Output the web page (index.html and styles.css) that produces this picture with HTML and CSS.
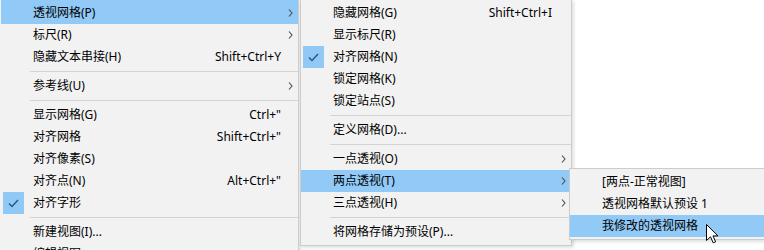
FILE: index.html
```
<!DOCTYPE html>
<html>
  <head>
    <meta charset="UTF-8">
    <title>视图菜单</title>
    <link rel="stylesheet" href="styles.css">
  </head>
  <body>
    <div class="screen">
      <ul class="menu menu-main">
        <li class="item first active"><span class="check"></span><span class="label">透视网格(P)</span><span class="key"></span><span class="arrow"><svg width="5" height="8" viewBox="0 0 5 8"><path d="M1 0.5 L4 4 L1 7.5" /></svg></span></li>
        <li class="item"><span class="check"></span><span class="label">标尺(R)</span><span class="key"></span><span class="arrow"><svg width="5" height="8" viewBox="0 0 5 8"><path d="M1 0.5 L4 4 L1 7.5" /></svg></span></li>
        <li class="item"><span class="check"></span><span class="label">隐藏文本串接(H)</span><span class="key">Shift+Ctrl+Y</span><span class="arrow"></span></li>
        <li class="sep"></li>
        <li class="item"><span class="check"></span><span class="label">参考线(U)</span><span class="key"></span><span class="arrow"><svg width="5" height="8" viewBox="0 0 5 8"><path d="M1 0.5 L4 4 L1 7.5" /></svg></span></li>
        <li class="sep"></li>
        <li class="item"><span class="check"></span><span class="label">显示网格(G)</span><span class="key">Ctrl+"</span><span class="arrow"></span></li>
        <li class="item"><span class="check"></span><span class="label">对齐网格</span><span class="key">Shift+Ctrl+"</span><span class="arrow"></span></li>
        <li class="item"><span class="check"></span><span class="label">对齐像素(S)</span><span class="key"></span><span class="arrow"></span></li>
        <li class="item"><span class="check"></span><span class="label">对齐点(N)</span><span class="key">Alt+Ctrl+"</span><span class="arrow"></span></li>
        <li class="item"><span class="check on"><svg width="11" height="9" viewBox="0 0 11 9"><path d="M1 4.5 L4 7.5 L10 1" /></svg></span><span class="label">对齐字形</span><span class="key"></span><span class="arrow"></span></li>
        <li class="sep"></li>
        <li class="item"><span class="check"></span><span class="label">新建视图(I)...</span><span class="key"></span><span class="arrow"></span></li>
        <li class="item"><span class="check"></span><span class="label">编辑视图...</span><span class="key"></span><span class="arrow"></span></li>
      </ul>

      <ul class="menu menu-sub">
        <li class="item"><span class="check"></span><span class="label">隐藏网格(G)</span><span class="key">Shift+Ctrl+I</span><span class="arrow"></span></li>
        <li class="item"><span class="check"></span><span class="label">显示标尺(R)</span><span class="key"></span><span class="arrow"></span></li>
        <li class="item"><span class="check on"><svg width="11" height="9" viewBox="0 0 11 9"><path d="M1 4.5 L4 7.5 L10 1" /></svg></span><span class="label">对齐网格(N)</span><span class="key"></span><span class="arrow"></span></li>
        <li class="item"><span class="check"></span><span class="label">锁定网格(K)</span><span class="key"></span><span class="arrow"></span></li>
        <li class="item"><span class="check"></span><span class="label">锁定站点(S)</span><span class="key"></span><span class="arrow"></span></li>
        <li class="sep"></li>
        <li class="item"><span class="check"></span><span class="label">定义网格(D)...</span><span class="key"></span><span class="arrow"></span></li>
        <li class="sep"></li>
        <li class="item"><span class="check"></span><span class="label">一点透视(O)</span><span class="key"></span><span class="arrow"><svg width="5" height="8" viewBox="0 0 5 8"><path d="M1 0.5 L4 4 L1 7.5" /></svg></span></li>
        <li class="item active"><span class="check"></span><span class="label">两点透视(T)</span><span class="key"></span><span class="arrow"><svg width="5" height="8" viewBox="0 0 5 8"><path d="M1 0.5 L4 4 L1 7.5" /></svg></span></li>
        <li class="item"><span class="check"></span><span class="label">三点透视(H)</span><span class="key"></span><span class="arrow"><svg width="5" height="8" viewBox="0 0 5 8"><path d="M1 0.5 L4 4 L1 7.5" /></svg></span></li>
        <li class="sep"></li>
        <li class="item"><span class="check"></span><span class="label">将网格存储为预设(P)...</span><span class="key"></span><span class="arrow"></span></li>
      </ul>

      <ul class="menu menu-presets">
        <li class="item"><span class="check"></span><span class="label">[两点-正常视图]</span></li>
        <li class="item"><span class="check"></span><span class="label">透视网格默认预设 1</span></li>
        <li class="item active"><span class="check"></span><span class="label">我修改的透视网格</span></li>
      </ul>

      <svg class="cursor" width="13" height="20" viewBox="0 0 13 20">
        <path d="M0.5 0.5 L0.5 16.5 L4.5 12.8 L7.2 18.8 L9.6 17.8 L7 11.9 L12 11.9 Z" />
      </svg>
    </div>
  </body>
</html>
```

FILE: styles.css
```
body {
    margin: 0;
    background-color: #fff;
    font-family: "Noto Sans", "Noto Sans CJK SC", sans-serif;
    font-size: 12px;
    color: #000;
    overflow: hidden;
}

.screen {
    position: relative;
    display: flex;
    align-items: flex-start;
    width: 764px;
    height: 250px;
    overflow: hidden;
}

.menu {
    list-style: none;
    margin: 0;
    padding: 2px 0;
    background-color: #f2f2f2;
    border: 1px solid #cccccc;
    box-shadow: 2px 2px 3px rgba(0, 0, 0, 0.12);
    flex-shrink: 0;
}

.menu-main {
    width: 297px;
    margin-top: -1px;
    padding-top: 0;
    border-left-color: #f2f2f2;
}

.menu-sub {
    width: 270px;
    margin-top: -1px;
    margin-left: 1px;
}

.menu-sub .key {
    padding-right: 3px;
}

.menu-presets {
    width: 220px;
    margin-top: 168px;
    margin-left: -3px;
    position: relative;
}

.item {
    display: flex;
    align-items: center;
    height: 22px;
    line-height: 22px;
    white-space: nowrap;
}

.item.first {
    height: 24px;
    padding-top: 2px;
    box-sizing: border-box;
}

.item.active {
    background-color: #91c9f7;
}

.check {
    display: flex;
    align-items: center;
    justify-content: center;
    width: 21px;
    height: 22px;
    margin: 0 9px 0 2px;
    flex-shrink: 0;
}

.check.on {
    background-color: #90c8f6;
}

.check svg path {
    fill: none;
    stroke: #2f5783;
    stroke-width: 1.5;
}

.label {
    flex: 1;
}

.key {
    padding-right: 1px;
}

.arrow {
    display: flex;
    align-items: center;
    justify-content: center;
    width: 16px;
    height: 22px;
    flex-shrink: 0;
}

.arrow svg path {
    fill: none;
    stroke: #4a4a4a;
    stroke-width: 1.1;
}

.sep {
    height: 1px;
    margin: 3px 0 3px 29px;
    background-color: #d3d3d3;
}

.cursor {
    position: absolute;
    left: 706px;
    top: 224px;
}

.cursor path {
    fill: #fff;
    stroke: #000;
    stroke-width: 1;
    stroke-linejoin: miter;
}
```
